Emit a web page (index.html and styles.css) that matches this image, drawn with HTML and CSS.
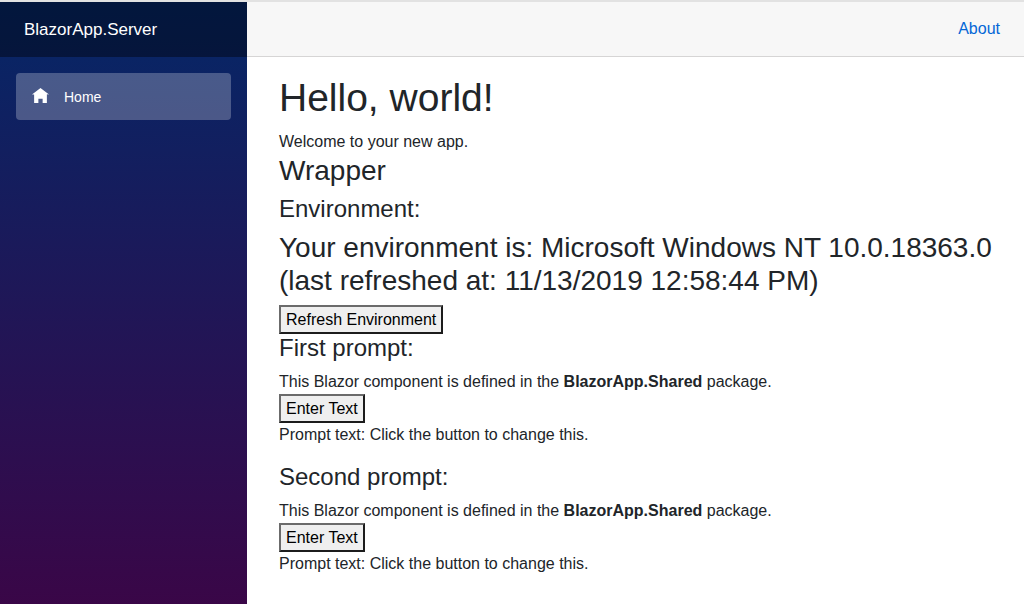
FILE: index.html
```html
<!DOCTYPE html>
<html lang="en">
<head>
<meta charset="utf-8">
<meta name="viewport" content="width=device-width, initial-scale=1">
<title>BlazorApp.Server</title>
<link rel="stylesheet" href="styles.css">
</head>
<body>
<div class="app">
  <aside class="sidebar">
    <div class="brand-bar"><a class="brand" href="#">BlazorApp.Server</a></div>
    <nav class="nav">
      <a class="nav-link" href="#" aria-current="page">
        <svg class="nav-icon" viewBox="0 0 8 8" aria-hidden="true"><path d="M4 0l-4 3h1v4h2v-2h2v2h2v-4.030l1 .03-4-3z"/></svg>
        <span>Home</span>
      </a>
    </nav>
  </aside>
  <div class="main">
    <header class="top-row"><a class="about" href="#">About</a></header>
    <main class="content">
      <h1>Hello, world!</h1>
      <p>Welcome to your new app.</p>
      <h2>Wrapper</h2>
      <section>
        <h3>Environment:</h3>
        <p class="environment">Your environment is: Microsoft Windows NT 10.0.18363.0 (last refreshed at: 11/13/2019 12:58:44 PM)</p>
        <button class="button" type="button">Refresh Environment</button>
      </section>
      <section class="prompt">
        <h3>First prompt:</h3>
        <p>This Blazor component is defined in the <strong>BlazorApp.Shared</strong> package.</p>
        <button class="button" type="button">Enter Text</button>
        <p>Prompt text: Click the button to change this.</p>
      </section>
      <section class="prompt">
        <h3>Second prompt:</h3>
        <p>This Blazor component is defined in the <strong>BlazorApp.Shared</strong> package.</p>
        <button class="button" type="button">Enter Text</button>
        <p>Prompt text: Click the button to change this.</p>
      </section>
    </main>
  </div>
</div>
</body>
</html>
```
FILE: styles.css
```css
* {
  box-sizing: border-box;
}

body {
  margin: 0;
  background: #fff;
  color: #212529;
  font: 16px/24px "Liberation Sans", Arial, sans-serif;
}

.app {
  display: flex;
  min-height: 100vh;
  border-top: 2px solid #e2e2e2;
}

.sidebar {
  flex: 0 0 247px;
  background: linear-gradient(180deg, #052767 0%, #3a0647 100%);
}

.brand-bar {
  display: flex;
  align-items: center;
  height: 55px;
  padding: 0 24px;
  background: rgba(0, 0, 0, 0.4);
}

.brand {
  color: #fff;
  font-size: 17px;
  text-decoration: none;
}

.nav {
  padding: 16px;
}

.nav-link {
  display: flex;
  align-items: center;
  gap: 15px;
  height: 47px;
  padding: 0 16px;
  border-radius: 4px;
  background: rgba(255, 255, 255, 0.25);
  color: #fff;
  font-size: 14px;
  text-decoration: none;
}

.nav-icon {
  width: 17px;
  height: 17px;
  fill: currentColor;
}

.main {
  flex: 1;
  min-width: 0;
}

.top-row {
  display: flex;
  align-items: center;
  justify-content: flex-end;
  height: 55px;
  padding: 0 24px;
  border-bottom: 1px solid #d6d5d5;
  background: #f7f7f7;
}

.about {
  color: #0366d6;
  text-decoration: none;
}

.content {
  padding: 17px 32px;
}

h1,
h2,
h3,
p {
  margin: 0;
  font-weight: 400;
}

h1 {
  margin-bottom: 8px;
  font-size: 39px;
  line-height: 48px;
}

h2,
.environment {
  margin-bottom: 8px;
  font-size: 28px;
  line-height: 33px;
}

h3 {
  margin-bottom: 8px;
  font-size: 24px;
  line-height: 28px;
}

.prompt {
  margin-bottom: 16px;
}

.button {
  display: block;
  padding: 1px 5px;
  border: 2px solid;
  border-color: #6b6b6b #1c1c1c #1c1c1c #6b6b6b;
  background: #efefef;
  color: #000;
  font: inherit;
  line-height: 23px;
}
```
